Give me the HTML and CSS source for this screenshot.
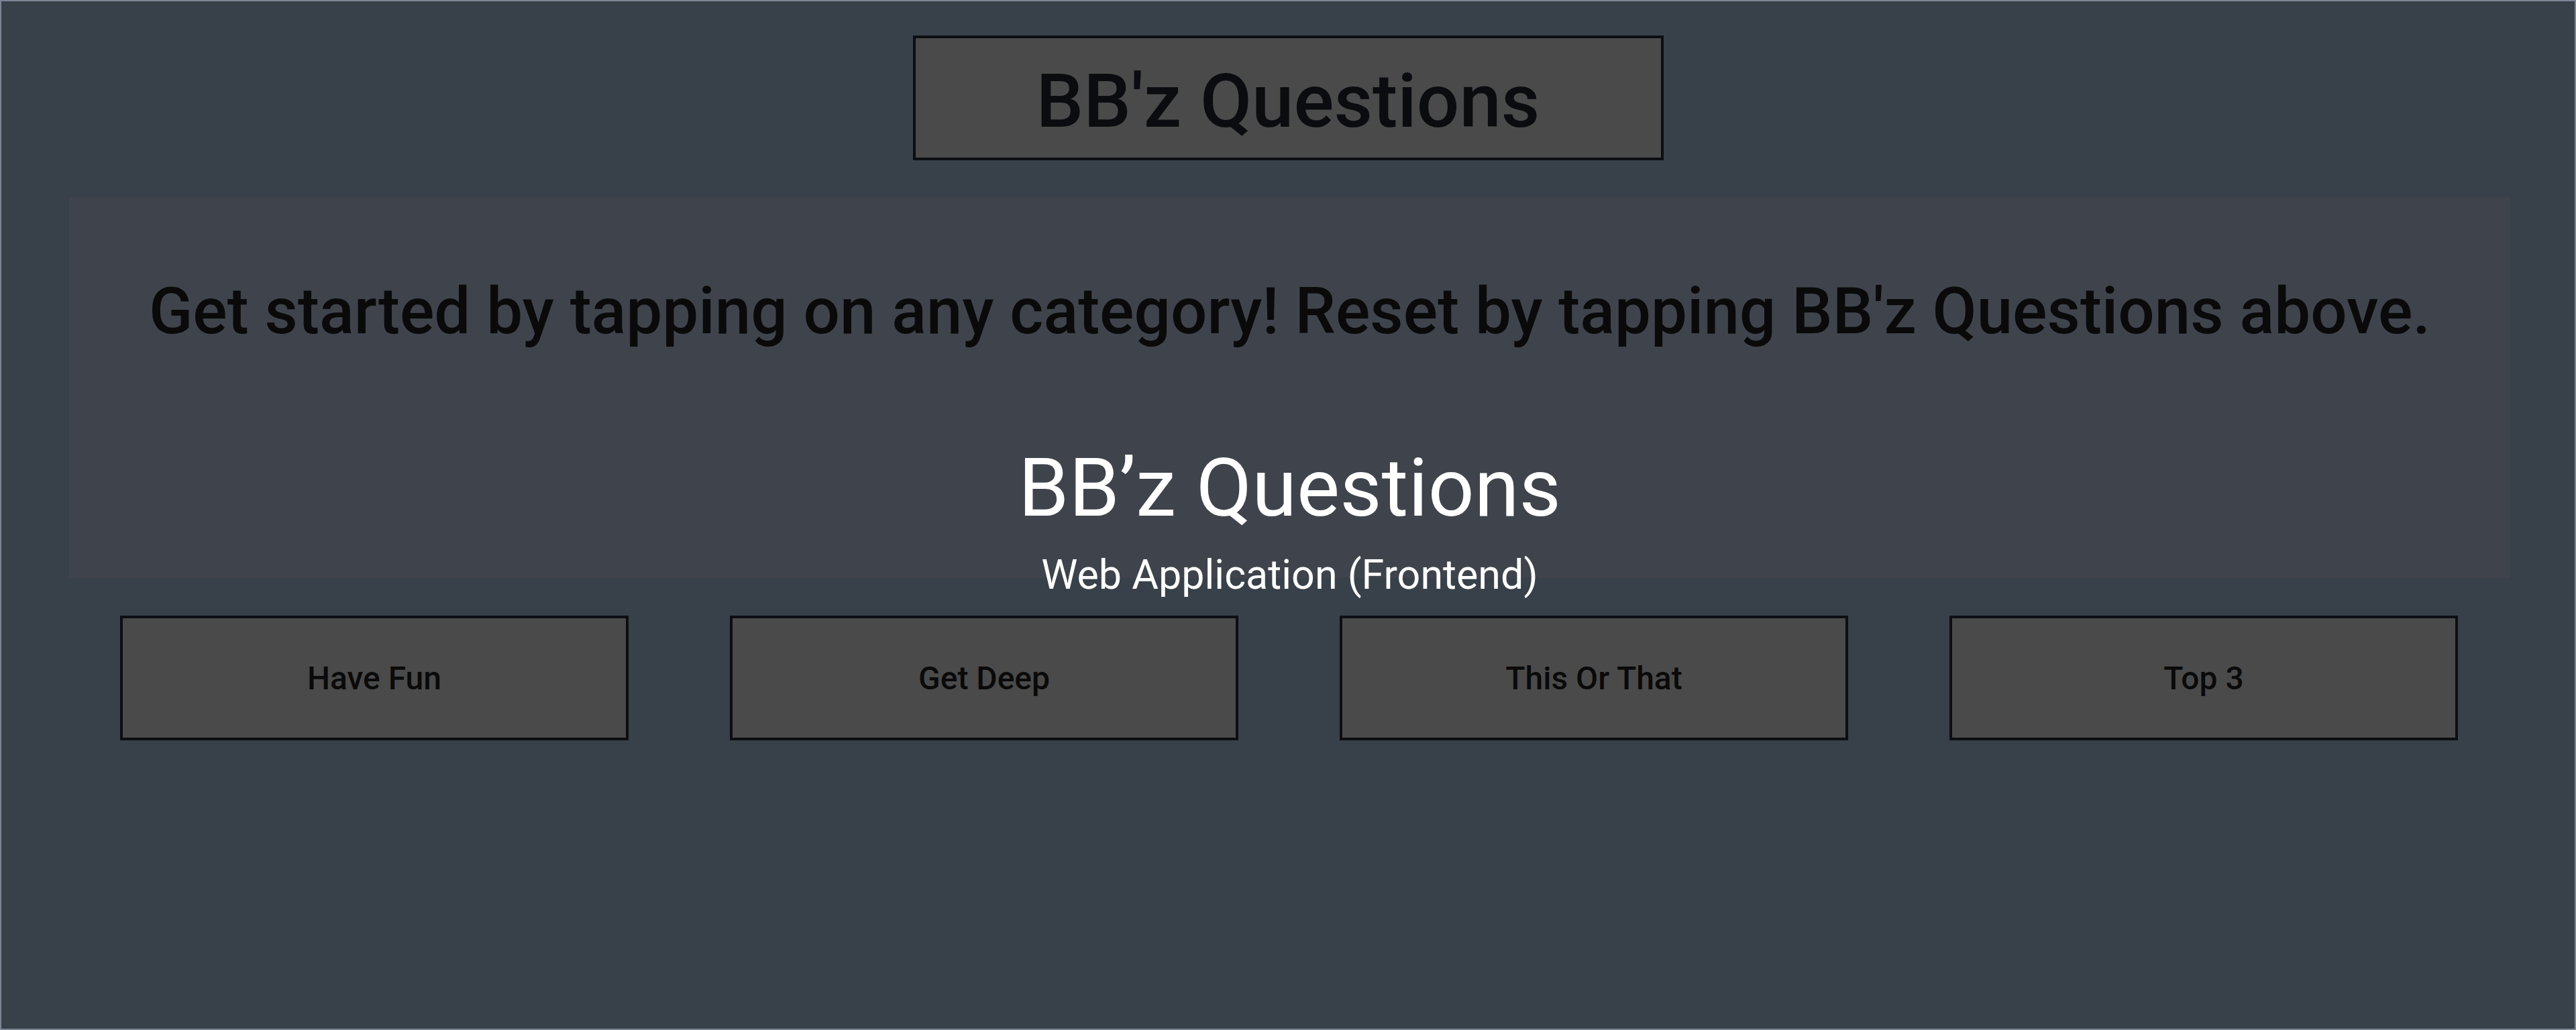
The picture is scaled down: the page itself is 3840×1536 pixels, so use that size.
FILE: index.html
```html
<!DOCTYPE html>
<html lang="en">
<head>
<meta charset="utf-8">
<title>BB'z Questions</title>
<link rel="stylesheet" href="styles.css">
</head>
<body>
<div class="frame">
  <header class="header">
    <div class="title-box">BB'z Questions</div>
  </header>
  <section class="panel">
    <p class="intro">Get started by tapping on any category! Reset by tapping BB'z Questions above.</p>
    <h1 class="app-name">BB’z Questions</h1>
    <p class="app-sub">Web Application (Frontend)</p>
  </section>
  <nav class="categories">
    <button class="cat">Have Fun</button>
    <button class="cat">Get Deep</button>
    <button class="cat">This Or That</button>
    <button class="cat">Top 3</button>
  </nav>
</div>
</body>
</html>
```

FILE: styles.css
```css
html, body {
  margin: 0;
  padding: 0;
}
body {
  background: #38414a;
  font-family: Roboto, "Liberation Sans", Arial, sans-serif;
}
.frame {
  box-sizing: border-box;
  width: 3840px;
  height: 1536px;
  border: 2px solid #7b8593;
  background: #38414a;
  overflow: hidden;
}
.header {
  display: flex;
  justify-content: center;
  padding-top: 51px;
}
.title-box {
  box-sizing: border-box;
  width: 1119px;
  height: 186px;
  border: 4px solid #0c0e12;
  background: #4a4a4a;
  color: #0b0c10;
  font-size: 112px;
  font-weight: 500;
  padding-top: 8px;
  display: flex;
  align-items: center;
  justify-content: center;
}
.panel {
  box-sizing: border-box;
  height: 568px;
  margin: 55px 96px 0 101px;
  background: #3f444c;
  display: flex;
  flex-direction: column;
  align-items: center;
  padding-top: 122px;
}
.intro {
  margin: 0;
  color: #0a0a0b;
  font-size: 96px;
  font-weight: 500;
  line-height: 1;
}
.app-name {
  margin: 156px 0 0;
  color: #ffffff;
  font-size: 121px;
  font-weight: 400;
  line-height: 1;
}
.app-sub {
  margin: 38px 0 0;
  color: #ffffff;
  font-size: 61px;
  font-weight: 400;
  line-height: 1;
}
.categories {
  display: grid;
  grid-template-columns: repeat(4, 1fr);
  column-gap: 151px;
  padding: 0 174px 0 177px;
  margin-top: 56px;
}
.cat {
  box-sizing: border-box;
  height: 186px;
  border: 4px solid #0c0e12;
  background: #4a4a4a;
  color: #0a0a0a;
  font-family: Roboto, "Liberation Sans", Arial, sans-serif;
  font-size: 48px;
  font-weight: 500;
  padding: 0;
  margin: 0;
}
```
